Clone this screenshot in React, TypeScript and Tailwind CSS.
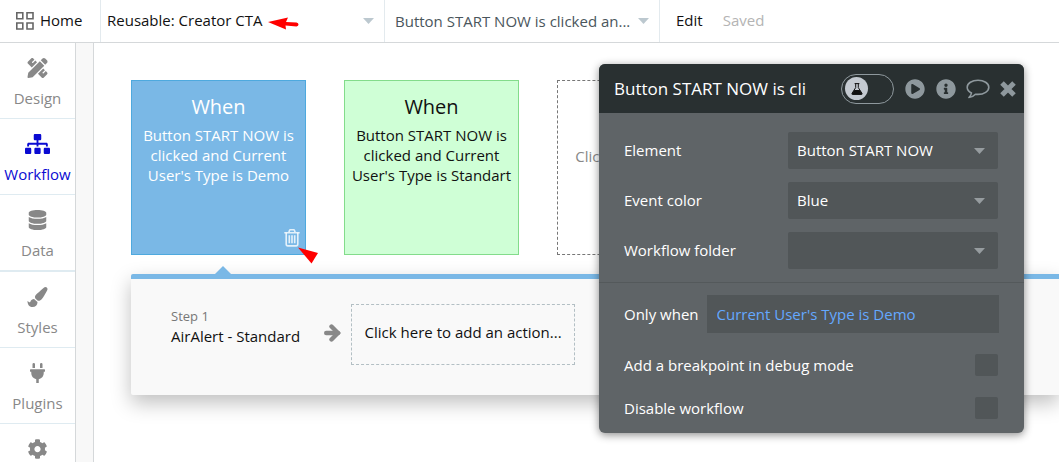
import type { ReactNode } from 'react';
import { FaPencilRuler, FaSitemap, FaDatabase, FaPaintBrush, FaPlug, FaCog, FaPlayCircle, FaInfoCircle } from 'react-icons/fa';

const navItems = [
  { label: 'Design', Icon: FaPencilRuler, box: 'h-[76px] border-b' },
  { label: 'Workflow', Icon: FaSitemap, box: 'h-[76px] border-b', active: true },
  { label: 'Data', Icon: FaDatabase, box: 'h-[77px] border-b-2' },
  { label: 'Styles', Icon: FaPaintBrush, box: 'h-[76px] border-b' },
  { label: 'Plugins', Icon: FaPlug, box: 'h-[76px] border-b' },
  { label: 'Settings', Icon: FaCog, box: 'h-[76px] border-b' },
];

const Caret = ({ className }: { className: string }) => (
  <svg className={`pointer-events-none absolute ${className}`} width="11" height="6" viewBox="0 0 11 6" fill="currentColor">
    <path d="M0 0h11L5.5 6z" />
  </svg>
);

const GridIcon = () => (
  <svg width="18" height="18" viewBox="0 0 18 18" fill="none" stroke="#666" strokeWidth="1.6">
    <path d="M.8.8h6v6h-6zM11 .8h6v6h-6zM.8 11h6v6h-6zM11 11h6v6h-6z" />
  </svg>
);

const TrashIcon = () => (
  <svg width="16" height="18" viewBox="0 0 16 18" fill="none" stroke="currentColor" strokeWidth="1.6">
    <path d="M.3 3.700h15.400M4.800 3.500l.7-2.100q.2-.6.8-.6h3.400q.6 0 .8.6l.7 2.100" />
    <path d="M2.200 3.700v11.400q0 1.800 1.600 1.800h8.400q1.600 0 1.600-1.800V3.700" />
    <path d="M5.300 6.300v8M8 6.300v8M10.700 6.300v8" />
  </svg>
);

const ArrowIcon = () => (
  <svg width="17" height="18" viewBox="0 0 17 18" fill="none" stroke="#888" strokeWidth="4.400">
    <path d="M2.200 9H14" strokeLinecap="round" />
    <path d="M7.500 2.500L14 9l-6.500 6.500" strokeLinecap="round" />
  </svg>
);

const FlaskIcon = () => (
  <svg width="12" height="12" viewBox="0 0 12 12" fill="none" stroke="#111" strokeWidth="1">
    <path d="M3.600.6h4.800M4.700.6v4L1 10.400q-.4 1 .6 1h8.800q1 0 .6-1L7.300 4.600v-4" />
    <path d="M3.300 7.500h5.400l2 3.600H1.300z" fill="#111" />
  </svg>
);

const CommentIcon = () => (
  <svg width="24" height="20" viewBox="0 0 24 20" fill="none" stroke="currentColor" strokeWidth="1.6" strokeLinejoin="round">
    <path d="M12 1.200C6 1.200 1.200 4.300 1.200 8.300c0 2.400 1.700 4.400 4.300 5.700-.3 1.900-1.200 3.300-2.600 4.500 2.700-.3 4.900-1.500 6.500-3.300.8.1 1.700.2 2.600.2 6 0 10.800-3.100 10.800-7.100S18 1.200 12 1.200z" />
  </svg>
);

const CloseIcon = () => (
  <svg width="16" height="16" viewBox="0 0 16 16" stroke="currentColor" strokeWidth="5">
    <path d="M2 2l12 12M14 2L2 14" />
  </svg>
);

const TopSelect = ({ label, value, className }: { label: string; value: string; className: string }) => (
  <div className={`relative border-r border-[#e3eaee] ${className}`}>
    <select aria-label={label} className="h-full w-full appearance-none truncate bg-transparent pr-6 outline-none">
      <option>{value}</option>
    </select>
    <Caret className="right-[10px] top-[18px] text-[#bcc8cf]" />
  </div>
);

const EventCard = ({ className, children, action }: { className: string; children: ReactNode; action?: ReactNode }) => (
  <div className={`relative flex h-[175px] w-[175px] shrink-0 flex-col items-center border px-1 pt-3 text-center ${className}`}>
    <h3 className="text-[20px] leading-7">When</h3>
    <p className="mt-1 leading-5">{children}</p>
    {action}
  </div>
);

const SelectRow = ({ id, label, value }: { id: string; label: string; value: string }) => (
  <div className="flex items-center justify-between pr-px">
    <label htmlFor={id}>{label}</label>
    <div className="relative h-[37px] w-[210px]">
      <select id={id} className="h-full w-full appearance-none rounded-xs bg-[#515658] pl-[9px] pr-8 outline-none">
        <option>{value}</option>
      </select>
      <Caret className="right-[13px] top-4 text-[#969c9f]" />
    </div>
  </div>
);

const CheckRow = ({ id, label }: { id: string; label: string }) => (
  <div className="flex h-[22px] items-center justify-between pr-px">
    <label htmlFor={id}>{label}</label>
    <input id={id} type="checkbox" className="h-[22px] w-[23px] appearance-none rounded-xs bg-[#515658] checked:bg-[#64a8ff]" />
  </div>
);

const PropertyEditor = () => (
  <section className="absolute right-[35px] top-16 w-[425px] overflow-hidden rounded-md bg-[#5f6467] text-white shadow-[0_2px_8px_rgba(0,0,0,0.45)]">
    <header className="flex h-[49px] items-center bg-[#293031] pl-[15px] pr-2 text-[#8e989d]">
      <h2 className="flex-1 text-[17px] text-white">Button START NOW is cli</h2>
      <button aria-label="Toggle experiment" className="flex h-[30px] w-[53px] items-center rounded-full border border-current pl-[3px]">
        <span className="flex h-[23px] w-[23px] items-center justify-center rounded-full bg-[#c4cad1]">
          <FlaskIcon />
        </span>
      </button>
      <button aria-label="Run" className="ml-[11px]"><FaPlayCircle size={20} /></button>
      <button aria-label="Info" className="ml-[11px]"><FaInfoCircle size={20} /></button>
      <button aria-label="Comment" className="ml-[10px]"><CommentIcon /></button>
      <button aria-label="Close" className="ml-[10px]"><CloseIcon /></button>
    </header>
    <div className="flex flex-col gap-[13px] px-[25px] pb-[13px] pt-[19px]">
      <SelectRow id="element" label="Element" value="Button START NOW" />
      <SelectRow id="color" label="Event color" value="Blue" />
      <SelectRow id="folder" label="Workflow folder" value="" />
    </div>
    <div className="flex flex-col gap-[21px] border-t border-[#54595b] px-[25px] pb-[14px] pt-3">
      <div className="flex items-center gap-2">
        <label htmlFor="condition">Only when</label>
        <input id="condition" defaultValue="Current User's Type is Demo" className="h-[38px] min-w-0 flex-1 bg-[#515658] px-[10px] text-[#64a8ff] outline-none" />
      </div>
      <CheckRow id="breakpoint" label="Add a breakpoint in debug mode" />
      <CheckRow id="disable" label="Disable workflow" />
    </div>
  </section>
);

export default function App() {
  return (
    <div className="relative flex h-screen flex-col overflow-hidden bg-white font-['Open_Sans',sans-serif] text-[15px] text-[#111]">
      {/* Top bar */}
      <header className="flex h-[43px] shrink-0 border-b border-[#d5d8da]">
        <a href="#home" className="flex w-[101px] items-center gap-[6px] border-r border-[#e3eaee] pb-px pl-4">
          <GridIcon />
          Home
        </a>
        <TopSelect label="Page" value="Reusable: Creator CTA" className="w-[284px] pb-px pl-[6px]" />
        <TopSelect label="Workflow event" value="Button START NOW is clicked an..." className="w-[275px] pl-[10px] text-[#4a565c]" />
        <nav className="flex items-center gap-5 pb-px pl-4">
          <button>Edit</button>
          <span className="text-[#b4b4b4]">Saved</span>
        </nav>
      </header>

      <div className="flex min-h-0 flex-1">
        {/* Sidebar */}
        <nav className="w-[76px] shrink-0 border-r border-[#d5d8da]">
          {navItems.map(({ label, Icon, box, active }) => (
            <a
              key={label}
              href={`#${label.toLowerCase()}`}
              className={`flex flex-col items-center gap-2 border-[#dfebf1] pt-[15px] ${box} ${active ? 'text-[#0a0ad2]' : 'text-[#888]'}`}
            >
              <Icon className="h-5 w-[25px] shrink-0" />
              <span className="leading-6">{label}</span>
            </a>
          ))}
        </nav>
        <div className="w-[18px] shrink-0 border-r border-[#d5d8da] bg-[#f8f8f8]" />

        {/* Workflow canvas */}
        <main className="min-w-0 flex-1 overflow-hidden pl-[37px] pt-[37px]">
          <div className="flex gap-[38px]">
            <EventCard
              className="border-[#4ea9de] bg-[#7ab8e6] text-white"
              action={<button aria-label="Delete event" className="absolute bottom-[7px] right-[5px] text-white/80"><TrashIcon /></button>}
            >
              Button START NOW is clicked and Current User's Type is Demo
            </EventCard>
            <EventCard className="border-[#83dc8b] bg-[#cfffd6]">
              Button START NOW is clicked and Current User's Type is Standart
            </EventCard>
            <button className="flex h-[175px] w-[175px] shrink-0 items-center justify-center border border-dashed border-[#777] px-3 pb-1 leading-5 text-[#888]">
              Click here to add an event...
            </button>
          </div>

          <svg className="ml-[84px] mt-[11px] block" width="16" height="8" viewBox="0 0 16 8">
            <path d="M0 8L8 0l8 8z" fill="#7ab8e6" />
          </svg>
          <section className="flex h-[121px] items-start rounded-l-xs border-t-5 border-[#7ab8e6] bg-[#f9f9f9] pl-10 pt-[25px] shadow-[0_8px_20px_rgba(0,0,0,0.25)]">
            <div className="pt-[2px]">
              <p className="text-[13px] leading-5 text-[#777]">Step 1</p>
              <p className="leading-5">AirAlert - Standard</p>
            </div>
            <div className="ml-6 mr-[10px] pt-5"><ArrowIcon /></div>
            <button className="h-[61px] w-[224px] border border-dashed border-[#b3bfc4] pb-1">Click here to add an action...</button>
          </section>
        </main>
      </div>

      {/* Red pointers */}
      <svg className="pointer-events-none absolute left-[268px] top-[17px]" width="31" height="14" viewBox="0 0 31 14">
        <path d="M0 5L20 .5 18 5l10.500.5q2 .5 2 2t-2 2L17.500 8.500 18 12.500z" fill="#f00" />
      </svg>
      <svg className="pointer-events-none absolute left-[298px] top-[247px]" width="20" height="17" viewBox="0 0 20 17">
        <path d="M0 .5L20 6l-6.500 10.500z" fill="#f00" />
      </svg>

      <PropertyEditor />
    </div>
  );
}
